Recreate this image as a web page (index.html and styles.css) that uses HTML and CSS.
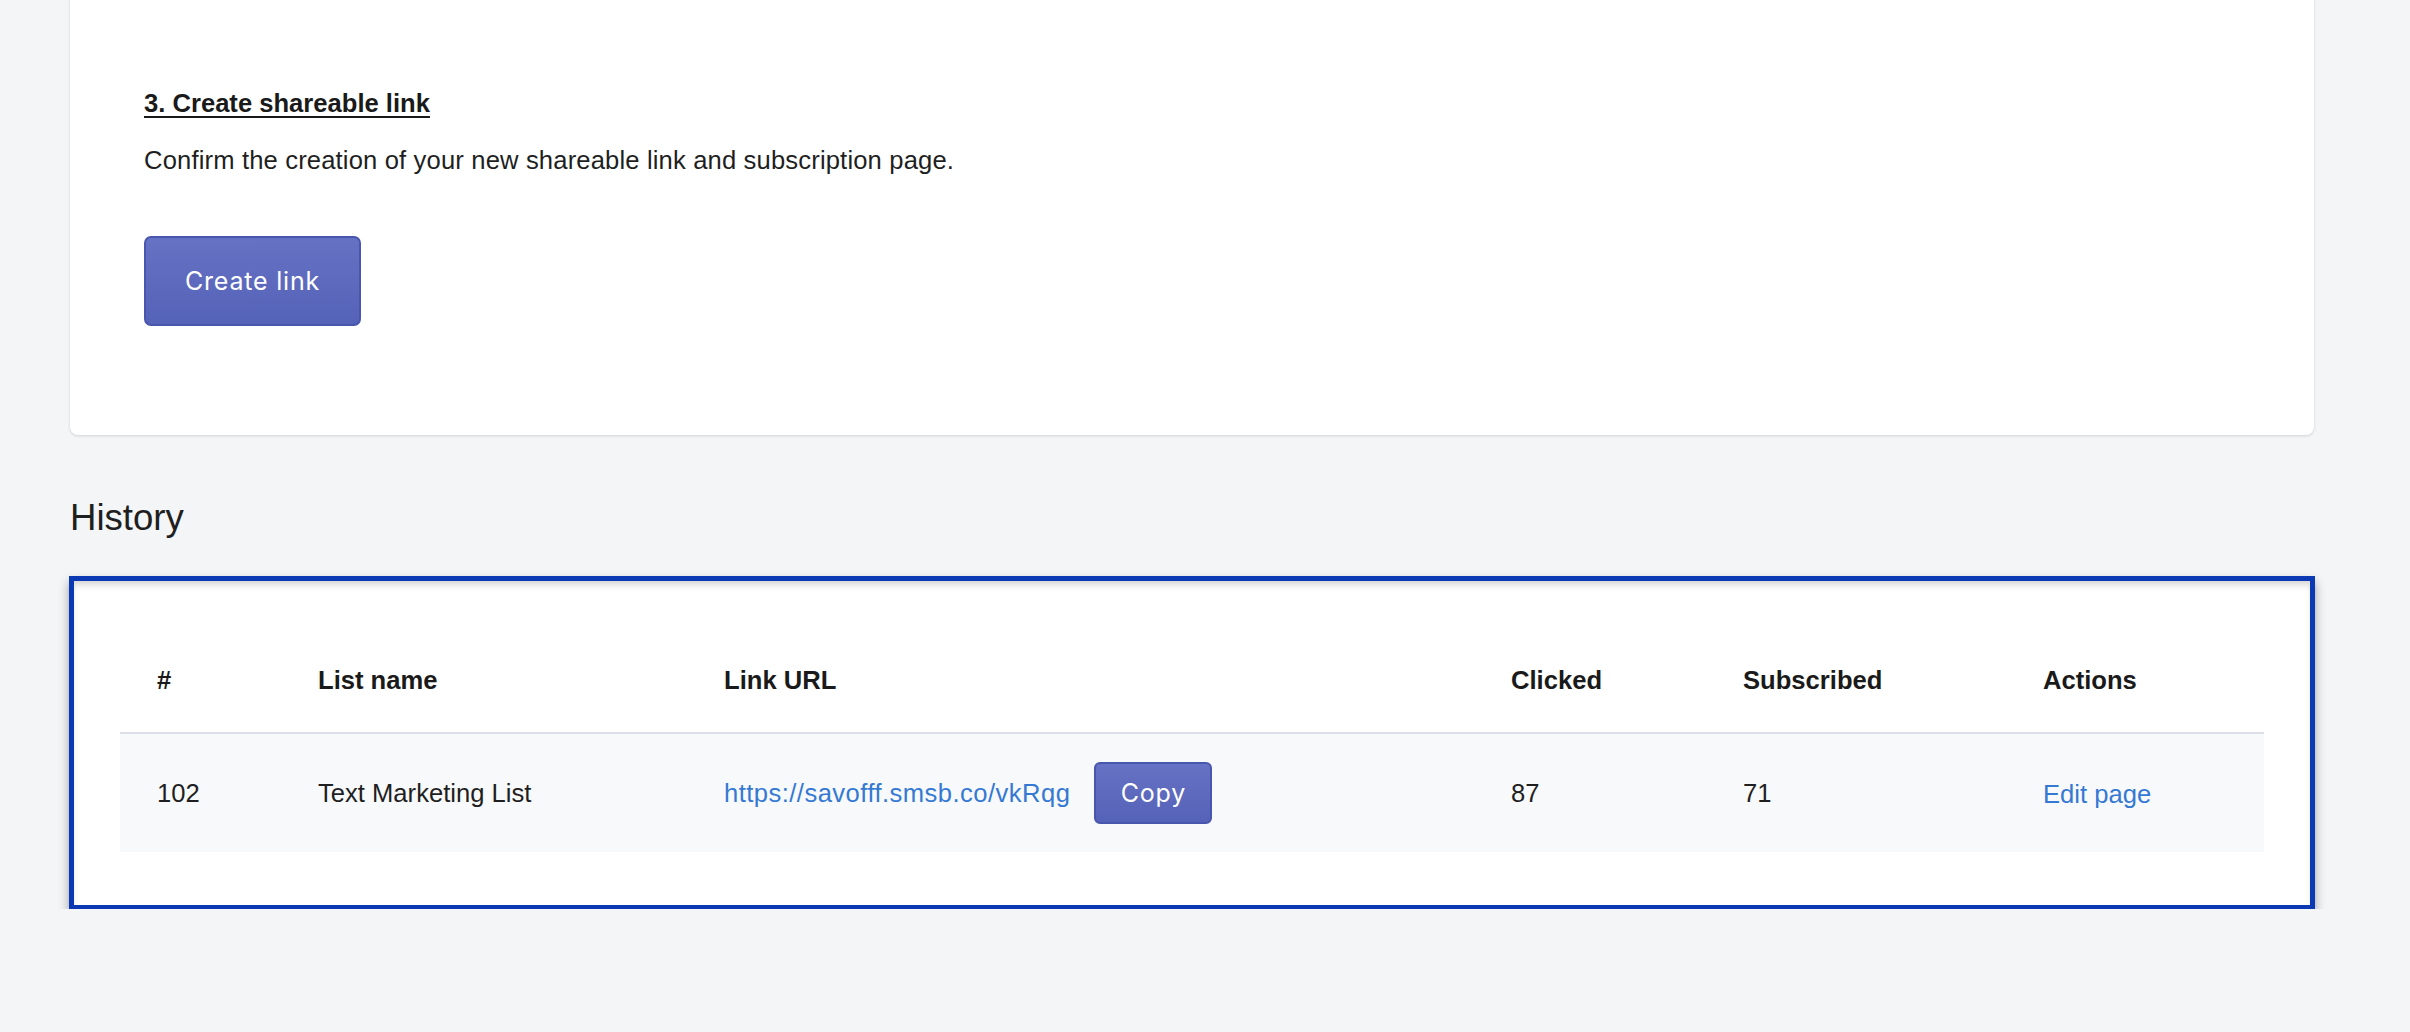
FILE: index.html
```html
<!DOCTYPE html>
<html lang="en">
<head>
  <meta charset="UTF-8">
  <meta name="viewport" content="width=device-width, initial-scale=1">
  <title>Shareable link</title>
  <link rel="stylesheet" href="styles.css">
</head>
<body>
  <div class="page">
    <div class="card step">
      <h3 class="step-title">3. Create shareable link</h3>
      <p class="step-text">Confirm the creation of your new shareable link and subscription page.</p>
      <button class="btn btn-lg">Create link</button>
    </div>

    <h2 class="section-title">History</h2>

    <div class="card history">
      <table class="history-table">
        <colgroup>
          <col class="c-id"><col class="c-name"><col class="c-url"><col class="c-clicked"><col class="c-subs"><col class="c-actions">
        </colgroup>
        <thead>
          <tr><th>#</th><th>List name</th><th>Link URL</th><th>Clicked</th><th>Subscribed</th><th>Actions</th></tr>
        </thead>
        <tbody>
          <tr>
            <td>102</td>
            <td>Text Marketing List</td>
            <td><a href="#" class="link link-url">https://savofff.smsb.co/vkRqg</a><button class="btn btn-sm">Copy</button></td>
            <td>87</td>
            <td>71</td>
            <td><a href="#" class="link">Edit page</a></td>
          </tr>
        </tbody>
      </table>
    </div>
  </div>
</body>
</html>
```

FILE: styles.css
```css
* { box-sizing: border-box; margin: 0; padding: 0; }
body { font-family: "Liberation Sans", Arial, sans-serif; font-size: 25.6px; line-height: 1.5; color: #1f1f1f; background: #f4f5f7; overflow: hidden; }
.page { width: 2244px; margin-left: 70px; }
.card { background: #fff; border-radius: 8px; box-shadow: 0 1px 3px rgba(0,0,0,0.15); }

.step { margin-top: -20px; padding: 104px 74px 109px; }
.step-title { font-size: 25.6px; font-weight: 700; line-height: 38.4px; color: #1a1a1a; text-decoration: underline; text-underline-offset: 4px; text-decoration-thickness: 2px; }
.step-text { margin-top: 19px; line-height: 38.4px; letter-spacing: 0.15px; }

.btn { font-family: Inter, "Open Sans", sans-serif; font-weight: 400; color: #fff; background: linear-gradient(#6672c3, #5462b8); border: 2px solid #4956ad; border-radius: 7px; cursor: pointer; letter-spacing: 0.8px; }
.btn-lg { display: block; margin-top: 56px; width: 217px; height: 90px; font-size: 25px; }
.btn-sm { width: 118px; height: 62px; margin-left: 24px; font-size: 25px; vertical-align: middle; border-radius: 6px; }

.section-title { font-size: 36.6px; font-weight: 400; line-height: 44px; margin: 61px 0 37px; color: #1f1f1f; }

.history { position: relative; padding: 52px 50px 57px; }
.history::after { content: ""; position: absolute; top: -1px; left: -1px; right: -1px; bottom: -1px; border: 5px solid #0a39b3; box-shadow: 0 6px 10px rgba(0,0,0,0.35), inset 0 6px 7px -2px rgba(0,0,0,0.16); pointer-events: none; }

.history-table { width: 100%; table-layout: fixed; border-collapse: collapse; }
.c-id { width: 161px; }
.c-name { width: 406px; }
.c-url { width: 787px; }
.c-clicked { width: 232px; }
.c-subs { width: 300px; }
.c-actions { width: 258px; }
.history-table th { height: 104px; padding: 0 37px; text-align: left; font-weight: 700; color: #1a1a1a; border-bottom: 2px solid #dbe0e6; vertical-align: middle; }
.history-table td { height: 119px; padding: 0 37px; background: #f8f9fb; vertical-align: middle; white-space: nowrap; }
.link { color: #3579d3; text-decoration: none; vertical-align: middle; }
.link-url { letter-spacing: 0.45px; }
```
